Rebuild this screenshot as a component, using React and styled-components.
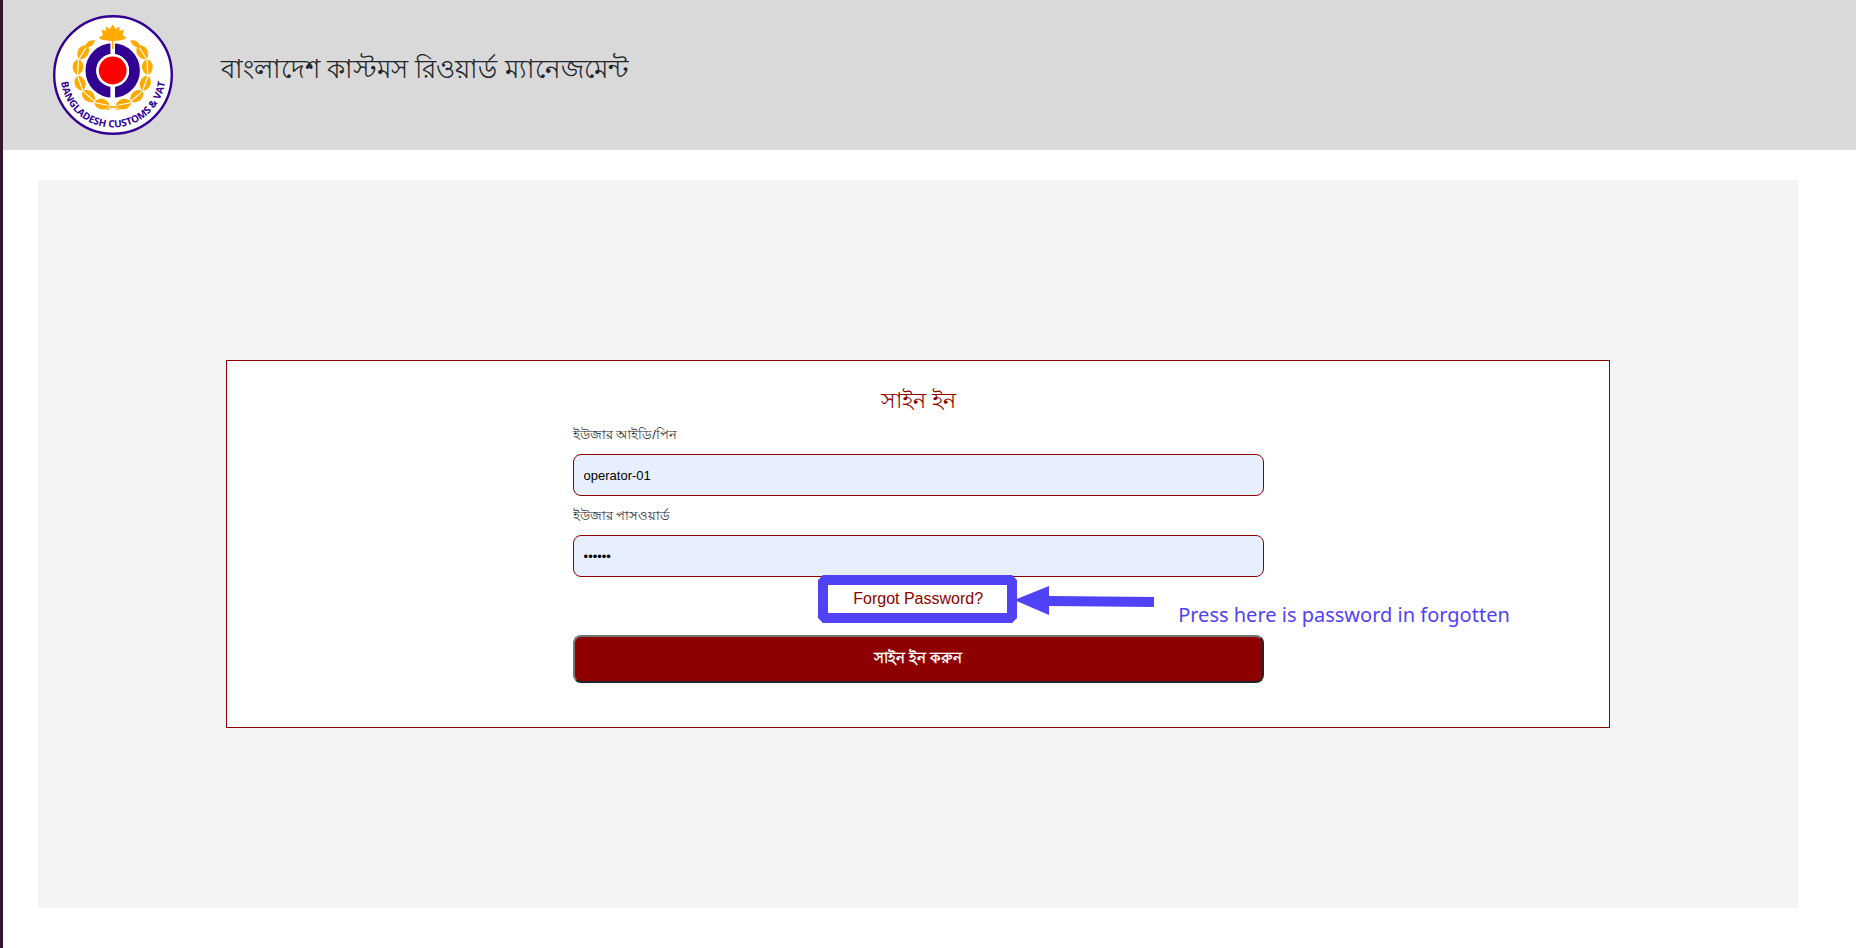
import React, {useState} from 'react';
import styled, {createGlobalStyle} from "styled-components";

const GlobalStyle = createGlobalStyle`
* { box-sizing: border-box; }
body {
    margin: 0;
    background: #fff;
    color: #212529;
    font-family: "Liberation Sans", Arial, sans-serif;
    font-size: 16px;
}
`

const Page = styled.div`
min-height: 100vh;
border-left: 3px solid #34152b;
`

const Header = styled.header`
display: flex;
align-items: flex-start;
gap: 48px;
padding: 15px 50px;
background: #d9d9d9;
`

const Logo = styled.svg`
width: 120px;
height: 120px;
flex: none;
`

const SiteTitle = styled.h1`
margin: 36px 0 0;
font-size: 26px;
font-weight: 400;
line-height: 36px;
`

const Main = styled.main`
width: 95%;
margin: 30px 0 0 35px;
padding: 180px 188px;
background: #f4f4f4;
`

const Card = styled.section`
display: flex;
justify-content: center;
padding: 26px 0 44px;
border: 1px solid #8e0000;
background: #fff;
`

const Form = styled.form`
display: flex;
flex-direction: column;
width: 50%;
`

const FormTitle = styled.h2`
margin: 0;
color: #8e0000;
font-size: 22px;
font-weight: 400;
line-height: 28px;
text-align: center;
`

const Label = styled.label`
padding-top: 10px;
font-size: 13px;
line-height: 20px;
margin-bottom: 9px;
`

const Input = styled.input`
height: 42px;
padding: 0 10px;
border: 1px solid #8e0000;
border-radius: 8px;
background: #e7eefe;
color: #000;
font-family: inherit;
font-size: 13px;
outline: none;
`

const ForgotRow = styled.div`
display: flex;
justify-content: center;
height: 58px;
`

const ForgotBox = styled.div`
position: relative;
width: 200px;
text-align: center;
`

const ForgotLink = styled.a`
color: #8e0000;
line-height: 44px;
text-decoration: none;
`

const Callout = styled.svg`
position: absolute;
top: -2px;
left: 0;
width: 340px;
height: 48px;
pointer-events: none;
`

const Note = styled.span`
position: absolute;
top: 24px;
left: 360px;
color: #5042f5;
font-family: "Noto Sans", sans-serif;
font-size: 20px;
line-height: 28px;
white-space: nowrap;
`

const SubmitButton = styled.button`
height: 48px;
padding: 0 0 2px;
border: 2px solid;
border-color: #767676 #212529 #212529 #767676;
border-radius: 8px;
background: #8e0000;
color: #fff;
font-family: inherit;
font-size: 15px;
font-weight: 700;
cursor: pointer;
`

const leaves = [
    {x: 30, y: 37.5, r: 32},
    {x: 25, y: 52.3, r: 3},
    {x: 27.2, y: 68.5, r: -20},
    {x: 35.8, y: 81.3, r: -50},
    {x: 49.2, y: 89.2, r: -78},
]

function Leaf({x, y, r}){
    return(
        <g transform={`translate(${x} ${y}) rotate(${r})`}>
            <path d="M-.6 -8C-7 -5-7 4-.6 7.6Z" />
            <path d="M.6 -8C7 -5 7 4 .6 7.6Z" />
        </g>
    )
}

function Branch(){
    return(
        <g fill="#ffaa00">
            <path d="M32 33C32 28 37 24 42 25.6C41 30 37 33 32 33Z" />
            {leaves.map((leaf) => <Leaf key={leaf.y} {...leaf} />)}
            <path d="M53 91Q60 91 66 95" fill="none" stroke="#ffaa00" strokeWidth="1.2" />
        </g>
    )
}

function CustomsLogo(){
    return(
        <Logo viewBox="0 0 120 120" role="img" aria-label="Bangladesh Customs & VAT">
            <circle cx="60" cy="60" r="58.8" fill="#fff" stroke="#330094" strokeWidth="2.4" />
            <circle cx="59.7" cy="55.5" r="21.8" fill="none" stroke="#330094" strokeWidth="10.8" />
            <path d="M59.7 27V85" stroke="#fff" strokeWidth="4.6" />
            <circle cx="59.7" cy="55.5" r="16.4" fill="#fff" />
            <circle cx="59.7" cy="55.5" r="13.9" fill="#ff0000" />
            <path fill="#ffaa00" d="M59.7 9.5L62.6 14L66.5 11.6L66.6 16L71 14.5L69.5 20L73.6 22.8C70 25.5 65 26 60.4 26V34H59V26C54 26 49 25.5 45.8 22.8L50 20L48.4 14.5L52.8 16L53 11.6L56.8 14Z" />
            <Branch />
            <g transform="translate(119.4 0) scale(-1 1)"><Branch /></g>
            <path id="logo-arc" d="M7.5 60A52.5 52.5 0 0 0 112.5 60" fill="none" />
            <text fill="#330094" fontFamily="Open Sans, sans-serif" fontSize="10" fontWeight="700" textAnchor="middle">
                <textPath href="#logo-arc" startOffset="50%">BANGLADESH CUSTOMS &amp; VAT</textPath>
            </text>
        </Logo>
    )
}

export default function App(){
    const [user, setUser] = useState("operator-01")
    const [password, setPassword] = useState("123456")

    return(
        <Page>
            <GlobalStyle />
            <Header>
                <CustomsLogo />
                <SiteTitle>বাংলাদেশ কাস্টমস রিওয়ার্ড ম্যানেজমেন্ট</SiteTitle>
            </Header>
            <Main>
                <Card>
                    <Form onSubmit={(e) => e.preventDefault()}>
                        <FormTitle>সাইন ইন</FormTitle>
                        <Label htmlFor="user">ইউজার আইডি/পিন</Label>
                        <Input id="user" type="text" value={user} onChange={(e) => setUser(e.target.value)} />
                        <Label htmlFor="password">ইউজার পাসওয়ার্ড</Label>
                        <Input id="password" type="password" value={password} onChange={(e) => setPassword(e.target.value)} />
                        <ForgotRow>
                            <ForgotBox>
                                <ForgotLink href="#">Forgot Password?</ForgotLink>
                                <Callout viewBox="0 0 340 48" aria-hidden="true">
                                    <rect x="5" y="5" width="189" height="38" fill="none" stroke="#5042f5" strokeWidth="10" strokeLinejoin="bevel" />
                                    <path d="M196 25L231 11V21L336 22V32L231 31V40Z" fill="#5042f5" />
                                </Callout>
                                <Note>Press here is password in forgotten</Note>
                            </ForgotBox>
                        </ForgotRow>
                        <SubmitButton type="submit">সাইন ইন করুন</SubmitButton>
                    </Form>
                </Card>
            </Main>
        </Page>
    )
}
